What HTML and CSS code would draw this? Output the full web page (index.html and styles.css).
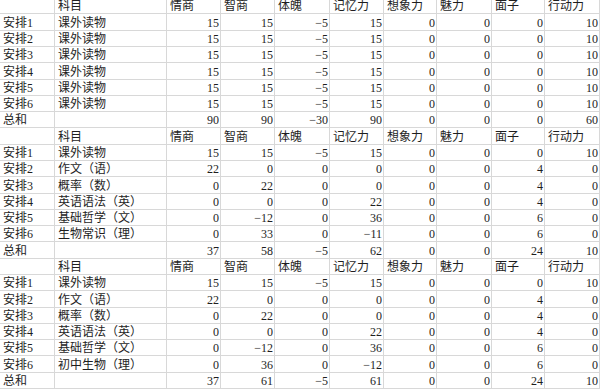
FILE: index.html
```html
<!DOCTYPE html>
<html lang="zh">
<head>
<meta charset="utf-8">
<title>安排</title>
<link rel="stylesheet" href="styles.css">
</head>
<body>
<div class="sheet">
  <div class="c"></div><div class="c t">科目</div><div class="c t">情商</div><div class="c t">智商</div><div class="c t">体魄</div><div class="c t">记忆力</div><div class="c t">想象力</div><div class="c t">魅力</div><div class="c t">面子</div><div class="c t">行动力</div>
  <div class="c t">安排1</div><div class="c t">课外读物</div><div class="c n">15</div><div class="c n">15</div><div class="c n">−5</div><div class="c n">15</div><div class="c n">0</div><div class="c n">0</div><div class="c n">0</div><div class="c n">10</div>
  <div class="c t">安排2</div><div class="c t">课外读物</div><div class="c n">15</div><div class="c n">15</div><div class="c n">−5</div><div class="c n">15</div><div class="c n">0</div><div class="c n">0</div><div class="c n">0</div><div class="c n">10</div>
  <div class="c t">安排3</div><div class="c t">课外读物</div><div class="c n">15</div><div class="c n">15</div><div class="c n">−5</div><div class="c n">15</div><div class="c n">0</div><div class="c n">0</div><div class="c n">0</div><div class="c n">10</div>
  <div class="c t">安排4</div><div class="c t">课外读物</div><div class="c n">15</div><div class="c n">15</div><div class="c n">−5</div><div class="c n">15</div><div class="c n">0</div><div class="c n">0</div><div class="c n">0</div><div class="c n">10</div>
  <div class="c t">安排5</div><div class="c t">课外读物</div><div class="c n">15</div><div class="c n">15</div><div class="c n">−5</div><div class="c n">15</div><div class="c n">0</div><div class="c n">0</div><div class="c n">0</div><div class="c n">10</div>
  <div class="c t">安排6</div><div class="c t">课外读物</div><div class="c n">15</div><div class="c n">15</div><div class="c n">−5</div><div class="c n">15</div><div class="c n">0</div><div class="c n">0</div><div class="c n">0</div><div class="c n">10</div>
  <div class="c t">总和</div><div class="c"></div><div class="c n">90</div><div class="c n">90</div><div class="c n">−30</div><div class="c n">90</div><div class="c n">0</div><div class="c n">0</div><div class="c n">0</div><div class="c n">60</div>

  <div class="c"></div><div class="c t">科目</div><div class="c t">情商</div><div class="c t">智商</div><div class="c t">体魄</div><div class="c t">记忆力</div><div class="c t">想象力</div><div class="c t">魅力</div><div class="c t">面子</div><div class="c t">行动力</div>
  <div class="c t">安排1</div><div class="c t">课外读物</div><div class="c n">15</div><div class="c n">15</div><div class="c n">−5</div><div class="c n">15</div><div class="c n">0</div><div class="c n">0</div><div class="c n">0</div><div class="c n">10</div>
  <div class="c t">安排2</div><div class="c t">作文（语）</div><div class="c n">22</div><div class="c n">0</div><div class="c n">0</div><div class="c n">0</div><div class="c n">0</div><div class="c n">0</div><div class="c n">4</div><div class="c n">0</div>
  <div class="c t">安排3</div><div class="c t">概率（数）</div><div class="c n">0</div><div class="c n">22</div><div class="c n">0</div><div class="c n">0</div><div class="c n">0</div><div class="c n">0</div><div class="c n">4</div><div class="c n">0</div>
  <div class="c t">安排4</div><div class="c t">英语语法（英）</div><div class="c n">0</div><div class="c n">0</div><div class="c n">0</div><div class="c n">22</div><div class="c n">0</div><div class="c n">0</div><div class="c n">4</div><div class="c n">0</div>
  <div class="c t">安排5</div><div class="c t">基础哲学（文）</div><div class="c n">0</div><div class="c n">−12</div><div class="c n">0</div><div class="c n">36</div><div class="c n">0</div><div class="c n">0</div><div class="c n">6</div><div class="c n">0</div>
  <div class="c t">安排6</div><div class="c t">生物常识（理）</div><div class="c n">0</div><div class="c n">33</div><div class="c n">0</div><div class="c n">−11</div><div class="c n">0</div><div class="c n">0</div><div class="c n">6</div><div class="c n">0</div>
  <div class="c t">总和</div><div class="c"></div><div class="c n">37</div><div class="c n">58</div><div class="c n">−5</div><div class="c n">62</div><div class="c n">0</div><div class="c n">0</div><div class="c n">24</div><div class="c n">10</div>

  <div class="c"></div><div class="c t">科目</div><div class="c t">情商</div><div class="c t">智商</div><div class="c t">体魄</div><div class="c t">记忆力</div><div class="c t">想象力</div><div class="c t">魅力</div><div class="c t">面子</div><div class="c t">行动力</div>
  <div class="c t">安排1</div><div class="c t">课外读物</div><div class="c n">15</div><div class="c n">15</div><div class="c n">−5</div><div class="c n">15</div><div class="c n">0</div><div class="c n">0</div><div class="c n">0</div><div class="c n">10</div>
  <div class="c t">安排2</div><div class="c t">作文（语）</div><div class="c n">22</div><div class="c n">0</div><div class="c n">0</div><div class="c n">0</div><div class="c n">0</div><div class="c n">0</div><div class="c n">4</div><div class="c n">0</div>
  <div class="c t">安排3</div><div class="c t">概率（数）</div><div class="c n">0</div><div class="c n">22</div><div class="c n">0</div><div class="c n">0</div><div class="c n">0</div><div class="c n">0</div><div class="c n">4</div><div class="c n">0</div>
  <div class="c t">安排4</div><div class="c t">英语语法（英）</div><div class="c n">0</div><div class="c n">0</div><div class="c n">0</div><div class="c n">22</div><div class="c n">0</div><div class="c n">0</div><div class="c n">4</div><div class="c n">0</div>
  <div class="c t">安排5</div><div class="c t">基础哲学（文）</div><div class="c n">0</div><div class="c n">−12</div><div class="c n">0</div><div class="c n">36</div><div class="c n">0</div><div class="c n">0</div><div class="c n">6</div><div class="c n">0</div>
  <div class="c t">安排6</div><div class="c t">初中生物（理）</div><div class="c n">0</div><div class="c n">36</div><div class="c n">0</div><div class="c n">−12</div><div class="c n">0</div><div class="c n">0</div><div class="c n">6</div><div class="c n">0</div>
  <div class="c t">总和</div><div class="c"></div><div class="c n">37</div><div class="c n">61</div><div class="c n">−5</div><div class="c n">61</div><div class="c n">0</div><div class="c n">0</div><div class="c n">24</div><div class="c n">10</div>
</div>
</body>
</html>
```

FILE: styles.css
```css
html, body {
  margin: 0;
  padding: 0;
  background: #ffffff;
  overflow: hidden;
}
.sheet {
  display: grid;
  grid-template-columns: 55px 112px 54px 54px 55px 54px 53px 55px 53px 55px;
  grid-auto-rows: 16.29px;
  margin-top: -1.8px;
  font-family: "Liberation Serif", "Noto Sans CJK SC", serif;
  font-size: 12px;
  color: #1e1e1e;
}
.c {
  box-sizing: border-box;
  border-right: 1px solid #d8d8d8;
  border-bottom: 1px solid #d8d8d8;
  display: flex;
  align-items: flex-end;
  white-space: nowrap;
  overflow: hidden;
  line-height: 13px;
}
.t {
  justify-content: flex-start;
  padding-left: 3px;
}
.n {
  justify-content: flex-end;
  padding-right: 1px;
}
```
